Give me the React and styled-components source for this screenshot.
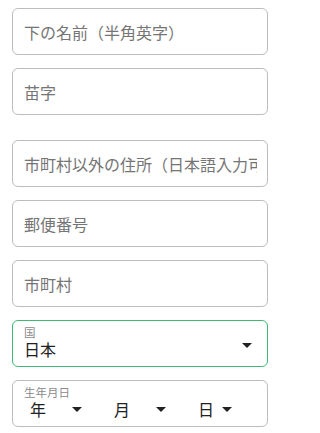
import React from 'react';
import styled, { createGlobalStyle } from 'styled-components';

const GlobalStyle = createGlobalStyle`
  html, body {
    margin: 0;
    padding: 0;
    background: #ffffff;
  }
  body {
    font-family: "Noto Sans CJK JP", "Noto Sans", sans-serif;
  }
  * {
    box-sizing: border-box;
  }
`;

const Form = styled.form`
  width: 280px;
  padding: 8px 12px;
  display: flex;
  flex-direction: column;
  gap: 13px;
`;

const Spacer = styled.div`
  height: ${props => props.size || 12}px;
  margin-top: -13px;
`;

const TextInput = styled.input`
  width: 100%;
  height: 47px;
  padding: 0 10px 0 11px;
  border: 1px solid #bdbdbd;
  border-radius: 6px;
  font-family: inherit;
  font-size: 16px;
  color: #212121;
  background: #fff;
  outline: none;

  &::placeholder {
    color: #757575;
  }
`;

const SelectBox = styled.div`
  width: 100%;
  height: 47px;
  padding: 4px 15px 0 11px;
  border: 1px solid ${props => props.focused ? '#3dba76' : '#bdbdbd'};
  border-radius: 6px;
  display: flex;
  flex-direction: row;
  align-items: center;
`;

const SelectBody = styled.div`
  flex: 1;
  display: flex;
  flex-direction: column;
  align-self: stretch;
`;

const FieldLabel = styled.span`
  font-size: 11.5px;
  line-height: 14px;
  color: #8a8a8a;
`;

const Value = styled.span`
  font-size: 16px;
  line-height: 20px;
  color: #212121;
`;

const Arrow = styled.span`
  width: 0;
  height: 0;
  border-left: 5px solid transparent;
  border-right: 5px solid transparent;
  border-top: 5px solid #212121;
`;

const DateRow = styled.div`
  display: flex;
  flex-direction: row;
  gap: 22px;
`;

const DatePart = styled.div`
  width: ${props => props.width}px;
  padding: 0 4px 0 6px;
  display: flex;
  flex-direction: row;
  align-items: center;
  justify-content: space-between;
  font-size: 16px;
  line-height: 20px;
  color: #212121;
`;

const Country = () => (
  <SelectBox focused>
    <SelectBody>
      <FieldLabel>国</FieldLabel>
      <Value>日本</Value>
    </SelectBody>
    <Arrow />
  </SelectBox>
);

const Birthday = () => (
  <SelectBox>
    <SelectBody>
      <FieldLabel>生年月日</FieldLabel>
      <DateRow>
        <DatePart width={62}>年<Arrow /></DatePart>
        <DatePart width={62}>月<Arrow /></DatePart>
        <DatePart width={44}>日<Arrow /></DatePart>
      </DateRow>
    </SelectBody>
  </SelectBox>
);

const App = () => (
  <>
    <GlobalStyle />
    <Form onSubmit={e => e.preventDefault()}>
      <TextInput placeholder="下の名前（半角英字）" />
      <TextInput placeholder="苗字" />
      <Spacer size={12} />
      <TextInput placeholder="市町村以外の住所（日本語入力可）" />
      <TextInput placeholder="郵便番号" />
      <TextInput placeholder="市町村" />
      <Country />
      <Birthday />
    </Form>
  </>
);

export default App;
